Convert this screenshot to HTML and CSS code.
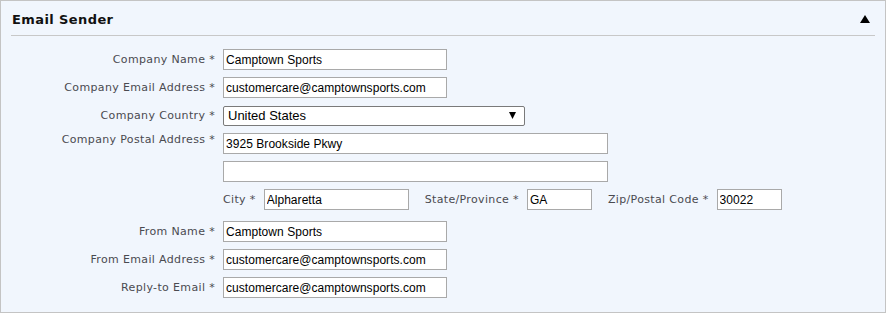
FILE: index.html
```html
<!DOCTYPE html>
<html lang="en">
<head>
    <meta charset="UTF-8">
    <title>Email Sender</title>
    <link rel="stylesheet" href="styles.css">
</head>
<body>
    <div class="panel">
        <div class="panel-header">
            <h2>Email Sender</h2>
            <svg class="toggle" width="10" height="8" viewBox="0 0 10 8">
                <polygon points="5,0 10,8 0,8" fill="#000"/>
            </svg>
        </div>

        <div class="form">
            <label class="label">Company Name *</label>
            <div class="field"><input type="text" class="input" value="Camptown Sports"></div>

            <label class="label">Company Email Address *</label>
            <div class="field"><input type="text" class="input" value="customercare@camptownsports.com"></div>

            <label class="label">Company Country *</label>
            <div class="field">
                <div class="select">
                    <span>United States</span>
                    <svg class="arrow" width="7" height="7" viewBox="0 0 7 7">
                        <polygon points="0,0 7,0 3.5,7" fill="#000"/>
                    </svg>
                </div>
            </div>

            <label class="label label-top">Company Postal Address *</label>
            <div class="field"><input type="text" class="input input-wide" value="3925 Brookside Pkwy"></div>

            <span class="label"></span>
            <div class="field"><input type="text" class="input input-wide" value=""></div>

            <span class="label"></span>
            <div class="field inline">
                <label>City *</label>
                <input type="text" class="input input-city" value="Alpharetta">
                <label class="after">State/Province *</label>
                <input type="text" class="input input-short" value="GA">
                <label class="after">Zip/Postal Code *</label>
                <input type="text" class="input input-short" value="30022">
            </div>

            <label class="label spaced">From Name *</label>
            <div class="field spaced"><input type="text" class="input" value="Camptown Sports"></div>

            <label class="label">From Email Address *</label>
            <div class="field"><input type="text" class="input" value="customercare@camptownsports.com"></div>

            <label class="label">Reply-to Email *</label>
            <div class="field"><input type="text" class="input" value="customercare@camptownsports.com"></div>
        </div>
    </div>
</body>
</html>
```

FILE: styles.css
```css
/* Base */
body {
    margin: 0;
    font-family: "DejaVu Sans", Verdana, sans-serif;
    background-color: #ffffff;
}

/* Panel */
.panel {
    width: 886px;
    height: 313px;
    border: 1px solid #c4c4c4;
    background-color: #f1f6fd;
    padding: 0 10px;
    box-sizing: border-box;
}

.panel-header {
    display: flex;
    justify-content: space-between;
    align-items: center;
    height: 32px;
    border-bottom: 1px solid #c8c8c8;
    padding-top: 2px;
    box-sizing: content-box;
}

.panel-header h2 {
    margin: 0 0 0 1px;
    font-size: 13px;
    font-weight: bold;
    letter-spacing: 0.4px;
    color: #111111;
}

.toggle {
    margin-right: 5px;
    margin-top: -1px;
}

/* Form grid */
.form {
    display: grid;
    grid-template-columns: 204px 1fr;
    column-gap: 8px;
    row-gap: 7px;
    padding-top: 13px;
}

.label {
    font-size: 11px;
    letter-spacing: 0.35px;
    color: #4a4a50;
    text-align: right;
    line-height: 21px;
    white-space: nowrap;
}

.label-top {
    line-height: 14px;
}

.spaced {
    margin-top: 4px;
}

.field {
    display: flex;
    align-items: center;
}

.input {
    height: 21px;
    width: 224px;
    box-sizing: border-box;
    border: 1px solid #a9a9a9;
    background-color: #ffffff;
    padding: 0 2px;
    font-family: "Liberation Sans", Arial, sans-serif;
    font-size: 12px;
    letter-spacing: 0.05px;
    color: #000000;
    outline: none;
}

.input-wide {
    width: 385px;
}

.input-city {
    width: 145px;
}

.input-short {
    width: 65px;
}

/* Select */
.select {
    width: 302px;
    height: 20px;
    box-sizing: border-box;
    border: 1px solid #7a7a7a;
    border-radius: 2px;
    background-color: #ffffff;
    display: flex;
    justify-content: space-between;
    align-items: center;
    padding: 0 8px 0 4px;
    font-family: "Liberation Sans", Arial, sans-serif;
    font-size: 13px;
    color: #000000;
}

/* Inline city row */
.inline label {
    font-size: 11px;
    letter-spacing: 0.35px;
    color: #4a4a50;
    margin-right: 8px;
    white-space: nowrap;
}

.inline label.after {
    margin-left: 16px;
}
```
